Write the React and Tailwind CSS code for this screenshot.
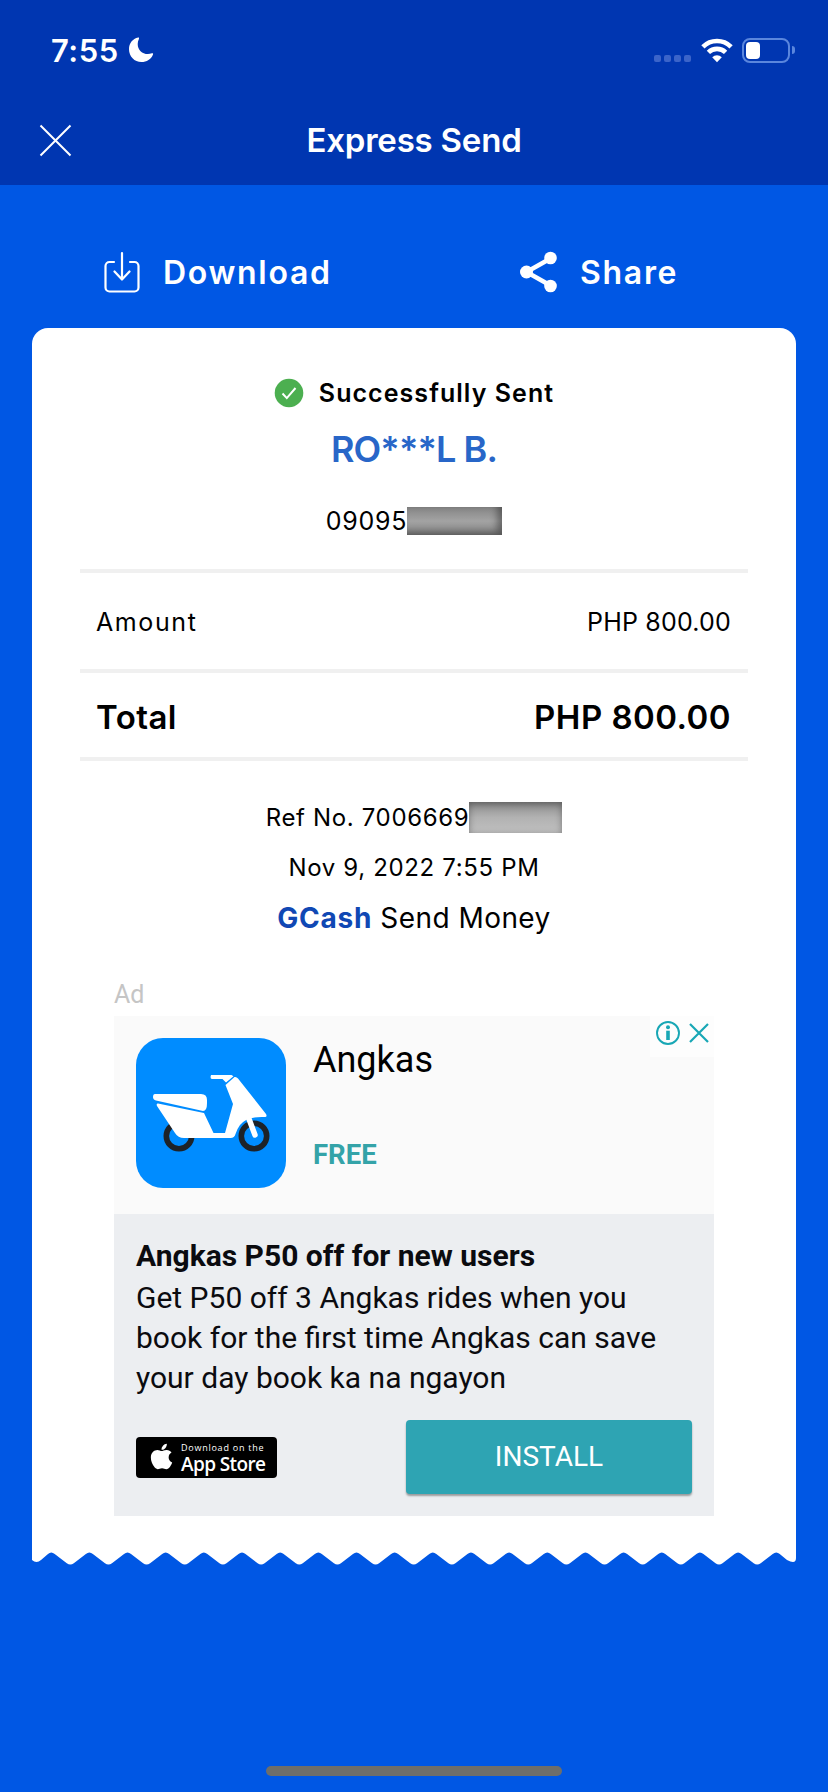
import React from 'react';
import { FaApple } from 'react-icons/fa';

const StatusBar = () => (
  <div className="flex h-[100px] items-center justify-between pl-[51px] pr-[33px]">
    <div className="flex items-center gap-[9px]">
      <span className="text-[31px] font-semibold leading-none tracking-[0.5px]">7:55</span>
      <svg width="26" height="26" viewBox="0 0 26 26" fill="currentColor">
        <path d="M10.2.6C4.6 1.8 1 6.400 1 12.200 1 19.400 6.500 25 13.400 25c5.200 0 9.800-3 11.600-7.600.4-1-.3-1.400-1.100-1.100-1.300.5-2.700.7-4 .7C14 17 9.700 12.800 9.700 6.900c0-1.700.4-3.400 1.200-5 .4-.8.100-1.500-.7-1.300z" />
      </svg>
    </div>
    <div className="flex items-center">
      <div className="mt-[16px] flex gap-[3px]">
        {[0, 1, 2, 3].map((i) => (
          <span key={i} className="h-[7px] w-[7px] rounded-[2px] bg-[#3b64c9]" />
        ))}
      </div>
      <svg className="ml-[10px]" width="32" height="26" viewBox="0 0 32 26" fill="none" stroke="currentColor" strokeWidth="4.600">
        <path d="M1.900 9.800a20 20 0 0 1 28.200 0" />
        <path d="M7.400 15.400a12.200 12.200 0 0 1 17.200 0" />
        <path d="M16 25.200l-4.800-4.900a6.900 6.900 0 0 1 9.600 0z" fill="currentColor" stroke="none" />
      </svg>
      <div className="ml-[9px] flex h-[25px] w-[48px] items-center rounded-[8px] border-2 border-[#5a86dd] pl-[2px]">
        <span className="h-[17px] w-[14px] rounded-[4px] bg-white" />
      </div>
      <span className="ml-[2px] h-[8px] w-[3px] rounded-r-full bg-[#5a86dd]" />
    </div>
  </div>
);

const TitleBar = () => (
  <div className="grid h-[85px] grid-cols-[1fr_auto_1fr] items-center pb-[5px] pl-[39px] pr-[39px]">
    <svg width="33" height="33" viewBox="0 0 33 33" fill="none" stroke="currentColor" strokeWidth="2">
      <path d="M1.500 1.500l30 30M31.500 1.500l-30 30" />
    </svg>
    <h1 className="text-[33px] font-semibold leading-none tracking-[-0.2px]">Express Send</h1>
  </div>
);

const Actions = () => (
  <div className="flex h-[143px] items-center pl-[103px] pt-[31px] text-[32px] font-semibold leading-none tracking-[1.700px] text-white">
    <button className="flex w-[416px] items-center gap-[22px]">
      <svg width="38" height="42" viewBox="0 0 38 42" fill="none" stroke="currentColor" strokeWidth="2.200" strokeLinecap="round" strokeLinejoin="round">
        <path d="M11 11H6.500a4 4 0 0 0-4 4v21.500a4 4 0 0 0 4 4h25a4 4 0 0 0 4-4V15a4 4 0 0 0-4-4H27" />
        <path d="M19 2v26M11.500 20.500L19 28.500l7.500-8" />
      </svg>
      <span className="pt-[1px]">Download</span>
    </button>
    <button className="flex items-center gap-[22px]">
      <svg width="39" height="42" viewBox="0 0 39 42" fill="none" stroke="currentColor" strokeWidth="4.500">
        <path d="M31.500 7.500L7.500 21l24 13.500" />
        <g fill="currentColor" stroke="none">
          <circle cx="31.500" cy="7" r="6.300" />
          <circle cx="7.500" cy="21" r="6.500" />
          <circle cx="31.500" cy="35" r="6.300" />
        </g>
      </svg>
      <span className="pt-[1px]">Share</span>
    </button>
  </div>
);

const Recipient = () => (
  <div className="flex flex-col items-center pt-[45px] text-black">
    <div className="flex h-[40px] items-center gap-[15px] text-[25px] font-semibold tracking-[1.050px]">
      <svg width="30" height="30" viewBox="0 0 30 30">
        <circle cx="15" cy="15" r="14.300" fill="#4caf50" />
        <path d="M8.500 15.500l4.300 4.600L21.500 10" fill="none" stroke="white" strokeWidth="2" />
      </svg>
      <span className="pt-[1px]">Successfully Sent</span>
    </div>
    <p className="mt-[14px] h-[44px] text-[36px] font-semibold leading-[44px] tracking-[-0.900px] text-[#2866c8]">RO***L B.</p>
    <div className="mt-[36px] flex h-[28px] items-center text-[25px] tracking-[0.800px]">
      <span className="pt-[1px]">09095</span>
      <span className="h-[28px] w-[95px] bg-linear-to-b from-[#858585] via-[#a3a3a3] to-[#858585] shadow-[inset_-5px_-3px_7px_rgba(0,0,0,0.35)]" />
    </div>
  </div>
);

const Breakdown = () => (
  <div className="mx-[48px] mt-[34px] text-black">
    <div className="flex h-[104px] items-center justify-between border-y-4 border-[#f0f0f0] pl-[16px] pr-[17px] pt-[3px] text-[25px]">
      <span className="tracking-[1.600px]">Amount</span>
      <span className="tracking-[0.200px]">PHP 800.00</span>
    </div>
    <div className="flex h-[88px] items-center justify-between border-b-4 border-[#f0f0f0] pl-[16px] pr-[17px] pt-[5px] text-[33px] font-semibold tracking-[0.450px]">
      <span>Total</span>
      <span>PHP 800.00</span>
    </div>
  </div>
);

const Reference = () => (
  <div className="flex flex-col items-center text-[24px] tracking-[0.650px] text-black">
    <div className="mt-[41px] flex h-[31px] items-center">
      <span className="pt-[1px]">Ref No. 7006669</span>
      <span className="h-[31px] w-[93px] bg-linear-to-b from-[#8c8c8c] via-[#b2b2b2] to-[#c0c0c0] shadow-[inset_0_2px_7px_rgba(0,0,0,0.35)]" />
    </div>
    <p className="mt-[18px] h-[32px] leading-[33px]">Nov 9, 2022 7:55 PM</p>
    <p className="mt-[19px] flex h-[32px] items-center gap-[8px] text-[28px]">
      <span className="font-bold tracking-[0.800px] text-[#1048b4]">GCash</span>
      <span className="tracking-[0.450px]">Send Money</span>
    </p>
  </div>
);

const Scooter = () => (
  <svg className="shrink-0" width="150" height="150" viewBox="0 0 150 150">
    <rect width="150" height="150" rx="27" fill="#008cff" />
    <g fill="none" stroke="#1d2228" strokeWidth="5.600">
      <circle cx="43" cy="98" r="12.700" />
      <circle cx="118" cy="98" r="12.700" />
    </g>
    <path d="M100 101C101 88 108 80 121 80" fill="none" stroke="#008cff" strokeWidth="2" />
    <g fill="white">
      <path d="M19 56h46q6 0 6 6v3q0 8-4 8L20 62.500q-3-1-3-3.500 0-3 2-3z" />
      <path d="M22 65.500L68 75l9.500 20H89L97 66 89.500 47l9-8q2-.5 3.500 1.500L130 76q1.500 3-1 3-18-1-25 8-3 4-4.500 9-1 4-5 4H48q-6 0-9-5L21 68q-1-2.500 1-2.500z" />
      <path d="M75 37h20.500l2 1.200-7.500 6.300-3.500-3.500H76q-1.500 0-1.500-2z" />
    </g>
    <path d="M113 81l6 16" stroke="white" strokeWidth="5.500" strokeLinecap="round" />
  </svg>
);

const AppStoreBadge = () => (
  <div className="flex h-[41px] w-[141px] items-center rounded-[4px] bg-black pl-[11px] text-white">
    <FaApple size={29} className="-mt-[1px]" />
    <div className="ml-[5px] flex flex-col pt-[2px] font-['Open_Sans',sans-serif]">
      <span className="text-[9px] leading-[11px] tracking-[0.750px]">Download on the</span>
      <span className="text-[19px] font-semibold leading-[22px] tracking-[-0.600px]">App Store</span>
    </div>
  </div>
);

const AdCard = () => (
  <div className="mx-[82px] mt-[46px] font-['Roboto',sans-serif]">
    <p className="h-[28px] text-[25px] leading-[29px] text-[#c5c5c5]">Ad</p>
    <div className="relative mt-[8px] flex h-[198px] bg-[#fafafa] pl-[22px] pt-[22px]">
      <Scooter />
      <div className="ml-[27px] text-black">
        <p className="h-[44px] text-[36px] leading-[44px]">Angkas</p>
        <p className="mt-[51px] text-[27.500px] font-bold leading-[44px] text-[#34a3a8]">FREE</p>
      </div>
      <div className="absolute right-0 top-0 flex h-[41px] w-[64px] items-start gap-[8px] bg-[#fdfdfd] pl-[5px] pt-[4px] text-[#18a7b5]">
        <svg width="26" height="26" viewBox="0 0 26 26">
          <circle cx="13" cy="13" r="11" fill="none" stroke="currentColor" strokeWidth="1.900" />
          <circle cx="13" cy="7.300" r="2" fill="currentColor" />
          <path d="M13 10.700V20" stroke="currentColor" strokeWidth="3.600" />
        </svg>
        <svg width="21" height="26" viewBox="0 0 21 26" fill="none" stroke="currentColor" strokeWidth="2.200">
          <path d="M1 4l18 18M19 4L1 22" />
        </svg>
      </div>
    </div>
    <div className="h-[302px] bg-[#eceef1] px-[22px] pt-[22px] text-[#0b0b0f]">
      <p className="text-[30px] font-bold leading-[40px]">Angkas P50 off for new users</p>
      <p className="mt-[2px] whitespace-nowrap text-[30px] leading-[40px]">
        Get P50 off 3 Angkas rides when you<br />
        book for the first time Angkas can save<br />
        your day book ka na ngayon
      </p>
      <div className="mt-[22px] flex items-center justify-between pb-px">
        <AppStoreBadge />
        <button className="h-[74px] w-[286px] rounded-[4px] bg-[#2ea4b3] text-[28px] text-white shadow-[0_2px_2px_rgba(0,0,0,0.35)]">
          INSTALL
        </button>
      </div>
    </div>
  </div>
);

// torn paper edge, one tooth every 38.16px
const TornEdge = () => {
  const step = 38.16;
  let d = 'M0 0V8Q4.500 12 9 8L16 2';
  for (let i = 0; i < 20; i += 1) {
    const x = 19.200 + i * step;
    d += `Q${x} -1 ${x + 3.500} 2`;
    if (i < 19) d += `L${x + 15.600} 11.200Q${x + step / 2} 14 ${x + 22.600} 11.200L${x + step - 3.500} 2`;
  }
  d += 'L755 8Q764 13 764 6V0Z';
  return (
    <svg className="block" width="764" height="14" viewBox="0 0 764 14" fill="white">
      <path d={d} />
    </svg>
  );
};

export default function App() {
  return (
    <div className="flex h-[1792px] w-[828px] flex-col bg-[#0057e4] font-['Inter',sans-serif]">
      <header className="bg-[#0036b1] text-white">
        <StatusBar />
        <TitleBar />
      </header>
      <Actions />
      <main className="mx-[32px]">
        <div className="h-[1224px] rounded-t-[16px] bg-white">
          <Recipient />
          <Breakdown />
          <Reference />
          <AdCard />
        </div>
        <TornEdge />
      </main>
      <div className="mx-auto mb-[16px] mt-auto h-[10px] w-[296px] rounded-full bg-[#6e6e6a]" />
    </div>
  );
}
